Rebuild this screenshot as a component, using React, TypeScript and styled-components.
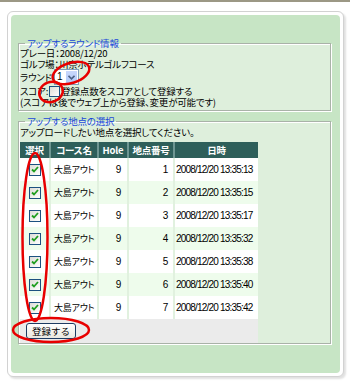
import React from 'react';
import styled, { createGlobalStyle } from 'styled-components';

const GlobalStyle = createGlobalStyle`
  html, body { margin: 0; padding: 0; background: #ffffff; }
  body {
    font-family: "Noto Sans CJK JP", "Noto Sans", sans-serif;
    font-size: 9.5px;
    letter-spacing: -0.2px;
    color: #000;
    font-feature-settings: "palt";
  }
`;

const Page = styled.div`
  position: relative;
  width: 350px;
  height: 386px;
  overflow: hidden;
`;

const TopBar = styled.div`
  height: 2px;
  background: #9c9885;
`;

const Card = styled.div`
  margin: 9px 6px 0 7px;
  border: 1px solid #d2d2d2;
  border-radius: 6px;
  padding: 3px;
  background: #fff;
  box-shadow: 2px 2px 2px rgba(0, 0, 0, 0.12);
`;

const GreenArea = styled.div`
  background: #c7e5c5;
  border-radius: 4px;
  padding: 24px 9px 29px 7px;
  display: flex;
  flex-direction: column;
  gap: 6px;
`;

const Fieldset = styled.fieldset<{ $pb: number }>`
  margin: 0;
  padding: 0 2px ${p => p.$pb}px 1px;
  min-width: 0;
  border: 1px solid #a9b2a8;
  box-shadow: inset 1px 1px 0 #ffffff, 1px 1px 0 #ffffff;
  background: #deefdc;
`;

const Legend = styled.legend`
  color: #1948d8;
  padding: 0 2px;
  margin-left: 5px;
  font-size: 9.5px;
  line-height: 9px;
  height: 9px;
`;

const Line = styled.div<{ $h: number }>`
  line-height: ${p => p.$h}px;
  height: ${p => p.$h}px;
  white-space: nowrap;
`;

const RoundRow = styled.div`
  display: flex;
  align-items: center;
  height: 16px;
  line-height: 12px;
  white-space: nowrap;
`;

const ScoreRow = styled.div`
  display: flex;
  align-items: center;
  height: 12px;
  line-height: 12px;
  white-space: nowrap;
`;

const SelectBox = styled.div`
  display: flex;
  align-items: stretch;
  width: 25px;
  height: 16px;
  box-sizing: border-box;
  border: 1px solid #7f9db9;
  background: #fff;
  margin-left: 2px;
`;

const SelectValue = styled.span`
  flex: 1;
  font-family: "Liberation Sans", Arial, sans-serif;
  font-size: 10px;
  line-height: 14px;
  padding-left: 2px;
`;

const SelectArrow = styled.span`
  width: 13px;
  display: flex;
  align-items: center;
  justify-content: center;
  background: linear-gradient(#c9d8fc, #b1c8f8);
  border: 1px solid #fff;
  box-sizing: border-box;
`;

const Box = styled.span<{ $size: number }>`
  display: inline-flex;
  align-items: center;
  justify-content: center;
  width: ${p => p.$size}px;
  height: ${p => p.$size}px;
  box-sizing: border-box;
  border: 1px solid #1c5180;
  background: linear-gradient(135deg, #dcdcd6, #ffffff);
  margin: 0 1px;
  vertical-align: middle;
`;

const Table = styled.table`
  border-collapse: collapse;
  table-layout: fixed;
  width: 238px;
  margin-top: 4px;
  font-size: 9px;
`;

const HeadCell = styled.th`
  background: #2e5f5a;
  color: #fff;
  font-weight: bold;
  font-size: 9.5px;
  height: 16px;
  padding: 0;
  text-align: center;
  line-height: 16px;
  border-left: 2px solid #6e9692;
  white-space: nowrap;
  &:first-child { border-left: none; }
`;

const Row = styled.tr<{ $alt: boolean }>`
  background: ${p => (p.$alt ? '#eefcec' : '#ffffff')};
`;

const Cell = styled.td<{ $align?: string; $pad?: string }>`
  height: 23px;
  padding: ${p => p.$pad || '0 2px 0 3px'};
  text-align: ${p => p.$align || 'left'};
  border-left: 2px solid #e1f1df;
  white-space: nowrap;
  line-height: 12px;
  &:first-child { border-left: none; text-align: center; padding: 0; }
`;

const DateText = styled.span`
  font-family: "Liberation Sans", Arial, sans-serif;
  font-size: 10px;
  letter-spacing: -0.8px;
`;

const NumText = styled.span`
  font-family: "Liberation Sans", Arial, sans-serif;
  font-size: 10px;
`;

const FooterBar = styled.div`
  width: 238px;
  height: 24px;
  background: #ebebeb;
  display: flex;
  align-items: center;
  padding-left: 6px;
  box-sizing: border-box;
`;

const Button = styled.button`
  width: 50px;
  height: 16px;
  padding: 0;
  font-family: inherit;
  font-size: 9.5px;
  line-height: 14px;
  color: #000;
  border: 1px solid #1d3b62;
  border-radius: 3px;
  background: linear-gradient(#ffffff, #e9e8e0);
`;

const Overlay = styled.svg`
  position: absolute;
  left: 0;
  top: 0;
  pointer-events: none;
`;

const CheckIcon = () => (
  <svg width="8" height="7" viewBox="0 0 8 7">
    <path d="M1 3.5 L3 5.5 L7 1" fill="none" stroke="#1f9e1f" strokeWidth="1.8" />
  </svg>
);

const rows = [
  { no: 1, time: '13:35:13' },
  { no: 2, time: '13:35:15' },
  { no: 3, time: '13:35:17' },
  { no: 4, time: '13:35:32' },
  { no: 5, time: '13:35:38' },
  { no: 6, time: '13:35:40' },
  { no: 7, time: '13:35:42' },
];

export default function App() {
  return (
    <Page>
      <GlobalStyle />
      <TopBar />
      <Card>
        <GreenArea>
          <Fieldset $pb={3}>
            <Legend>アップするラウンド情報</Legend>
            <Line $h={11}>プレー日：2008/12/20</Line>
            <Line $h={10}>ゴルフ場：川奈ホテルゴルフコース</Line>
            <RoundRow>
              ラウンド
              <SelectBox>
                <SelectValue>1</SelectValue>
                <SelectArrow>
                  <svg width="7" height="5" viewBox="0 0 7 5">
                    <path d="M0.5 0.8 L3.5 3.8 L6.5 0.8" fill="none" stroke="#4d6185" strokeWidth="1.6" />
                  </svg>
                </SelectArrow>
              </SelectBox>
            </RoundRow>
            <ScoreRow>
              スコア:
              <Box $size={11} />
              登録点数をスコアとして登録する
            </ScoreRow>
            <Line $h={10}>(スコアは後でウェブ上から登録、変更が可能です)</Line>
          </Fieldset>
          <Fieldset $pb={0}>
            <Legend>アップする地点の選択</Legend>
            <Line $h={12}>アップロードしたい地点を選択してください。</Line>
            <Table>
              <colgroup>
                <col style={{ width: 30 }} />
                <col style={{ width: 48 }} />
                <col style={{ width: 30 }} />
                <col style={{ width: 46 }} />
                <col style={{ width: 84 }} />
              </colgroup>
              <thead>
                <tr>
                  <HeadCell>選択</HeadCell>
                  <HeadCell>コース名</HeadCell>
                  <HeadCell>Hole</HeadCell>
                  <HeadCell>地点番号</HeadCell>
                  <HeadCell>日時</HeadCell>
                </tr>
              </thead>
              <tbody>
                {rows.map((r, i) => (
                  <Row key={r.no} $alt={i % 2 === 1}>
                    <Cell>
                      <Box $size={12}>
                        <CheckIcon />
                      </Box>
                    </Cell>
                    <Cell>大島アウト</Cell>
                    <Cell $align="right" $pad="0 6px 0 0">
                      <NumText>9</NumText>
                    </Cell>
                    <Cell $align="right" $pad="0 5px 0 0">
                      <NumText>{r.no}</NumText>
                    </Cell>
                    <Cell $pad="0 0 0 1px">
                      <DateText>2008/12/20 {r.time}</DateText>
                    </Cell>
                  </Row>
                ))}
              </tbody>
            </Table>
            <FooterBar>
              <Button>登録する</Button>
            </FooterBar>
          </Fieldset>
        </GreenArea>
      </Card>
      <Overlay width="350" height="386" viewBox="0 0 350 386">
        <g fill="none" stroke="#e80000" strokeWidth="2.5">
          <ellipse cx="71" cy="73" rx="19" ry="10" transform="rotate(-18 71 73)" />
          <ellipse cx="51" cy="92" rx="12" ry="10" transform="rotate(-20 51 92)" />
          <ellipse cx="35" cy="237" rx="12.5" ry="84" />
          <ellipse cx="51" cy="330" rx="38" ry="12" />
        </g>
      </Overlay>
    </Page>
  );
}
